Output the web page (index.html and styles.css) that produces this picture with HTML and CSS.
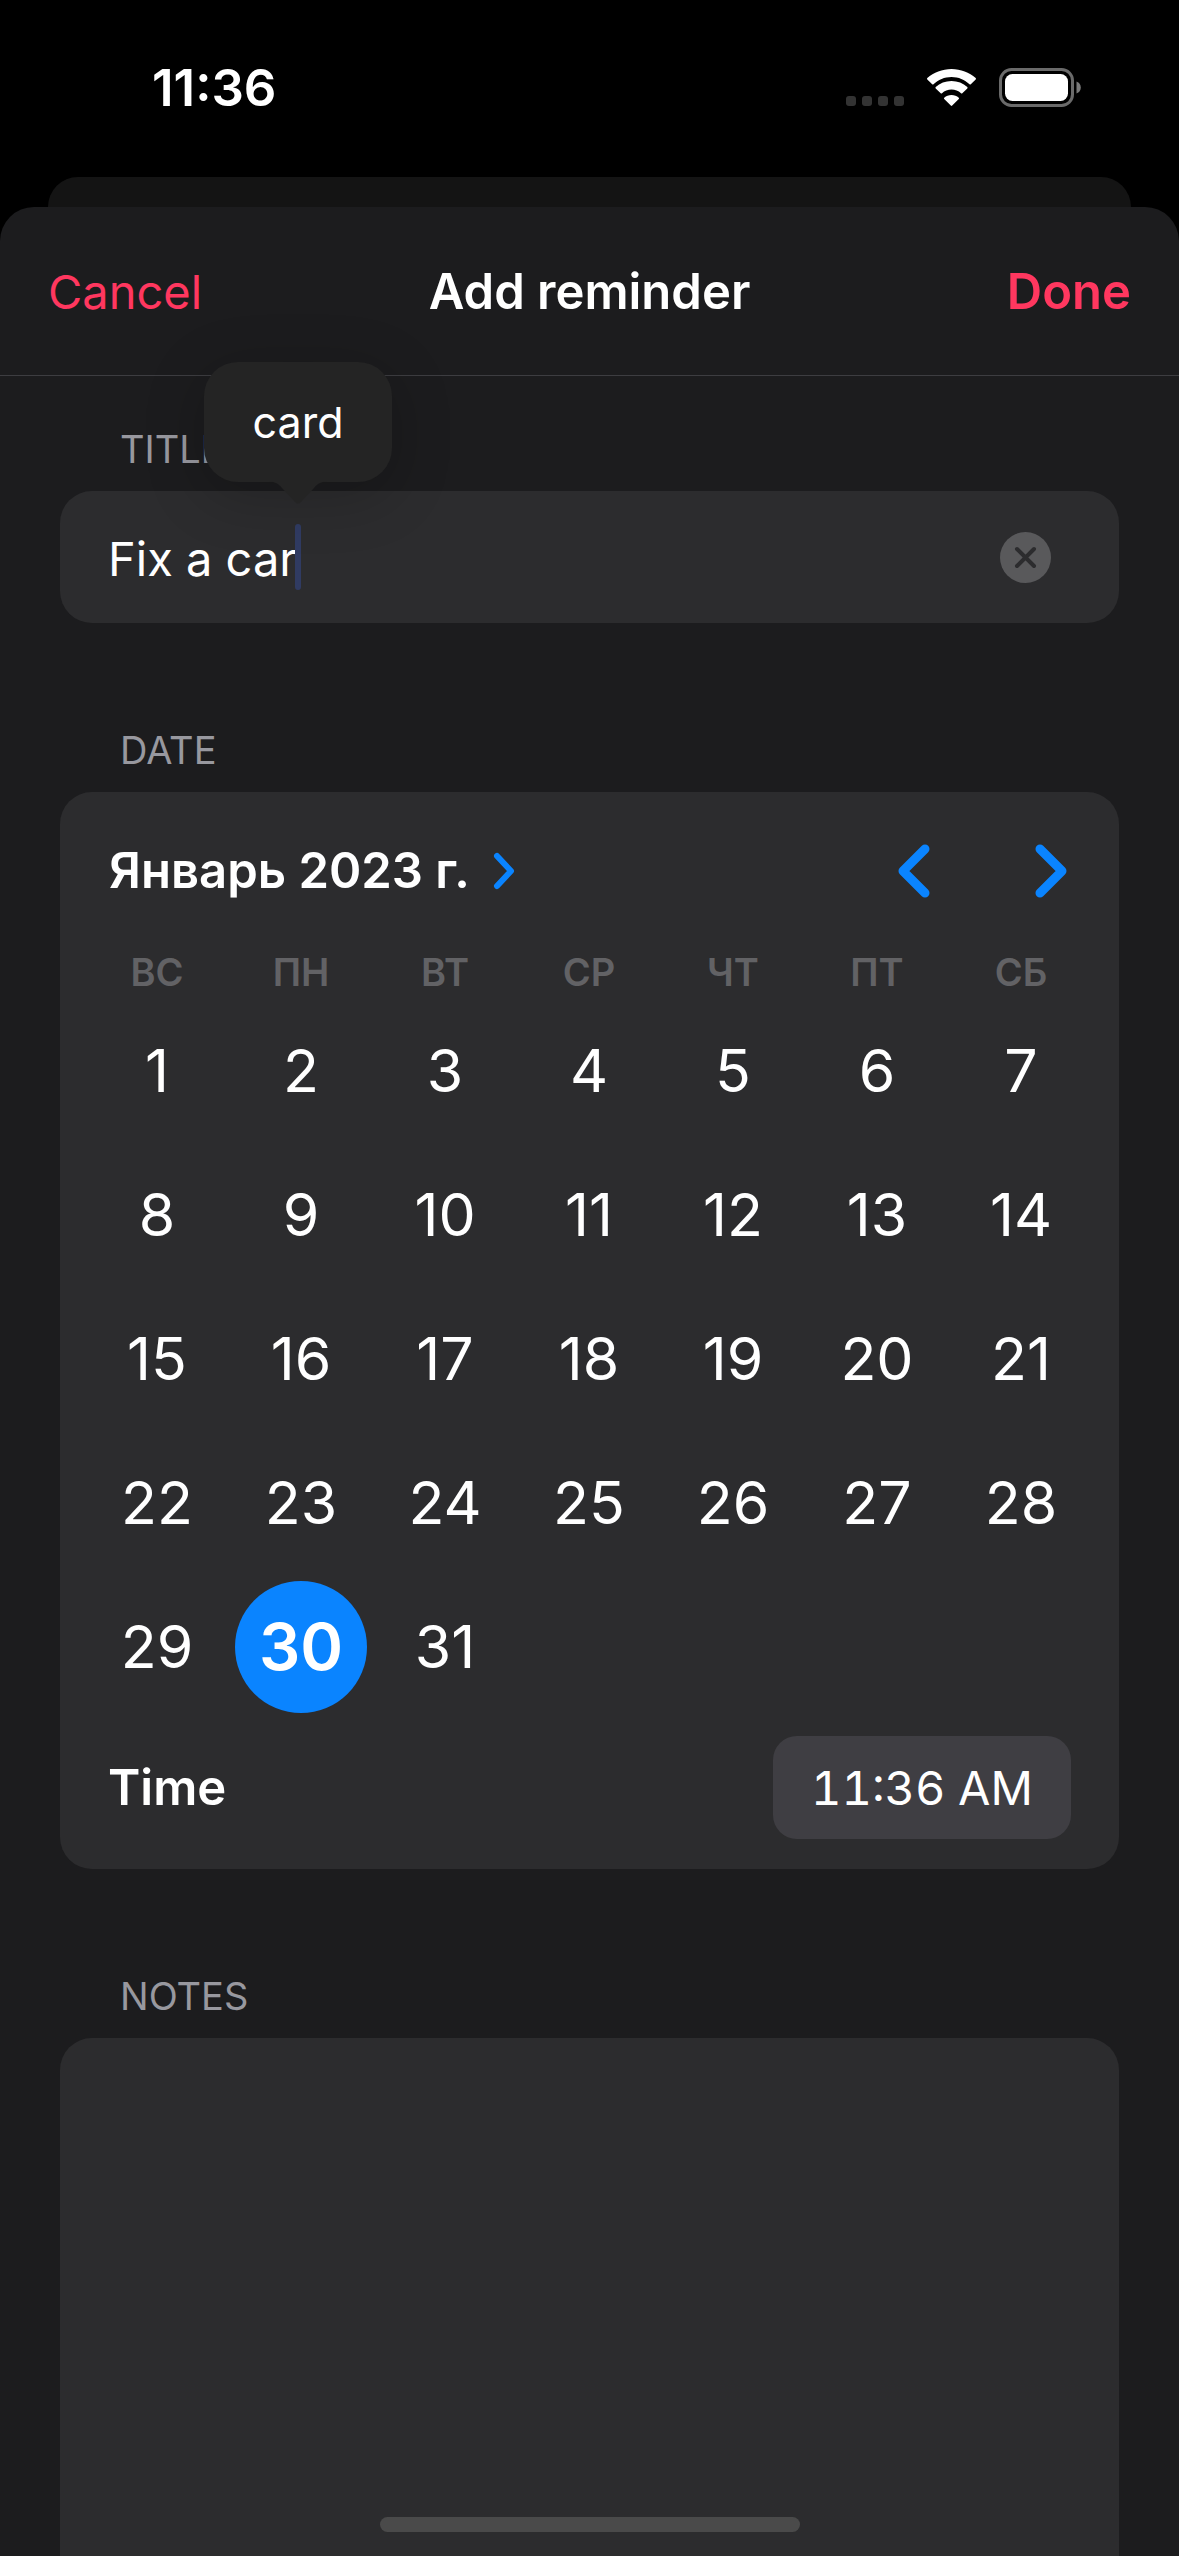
FILE: index.html
```html
<!DOCTYPE html>
<html lang="en">
<head>
<meta charset="utf-8">
<meta name="viewport" content="width=device-width, initial-scale=1">
<title>Add reminder</title>
<link rel="stylesheet" href="styles.css">
</head>
<body>
<header class="status">
  <span class="status-time">11:36</span>
  <div class="status-icons">
    <svg class="dots" width="58" height="10" viewBox="0 0 58 10" aria-hidden="true">
      <rect width="10" height="10" rx="3"/><rect x="16" width="10" height="10" rx="3"/><rect x="32" width="10" height="10" rx="3"/><rect x="48" width="10" height="10" rx="3"/>
    </svg>
    <svg class="wifi" width="51" height="38" viewBox="0 0 51 38" aria-hidden="true">
      <path d="M25.500 8c7 0 13.300 2.800 18 7.300.4.400 1 .4 1.300 0l4.900-4.800c.4-.4.4-1 0-1.400C43.300 3.500 34.800 0 25.500 0S7.700 3.500 1.300 9.100c-.4.400-.4 1 0 1.400l4.900 4.800c.4.400.9.400 1.300 0 4.700-4.500 11-7.300 18-7.300z"/>
      <path d="M25.500 20.600c3.600 0 7 1.300 9.500 3.700.4.400 1 .4 1.300 0l5-4.800c.4-.4.400-1 0-1.400-4.200-3.900-9.700-6.100-15.800-6.100S13.900 14.200 9.700 18.100c-.4.400-.4 1 0 1.400l5 4.800c.4.400.9.400 1.300 0 2.500-2.400 5.900-3.700 9.500-3.700z"/>
      <path d="M32.800 28.700c.4.400.4 1 0 1.300l-6.600 6.600c-.4.400-1 .4-1.400 0L18.200 30c-.4-.3-.4-.9 0-1.300 2-1.700 4.500-2.700 7.300-2.700s5.300 1 7.300 2.700z"/>
    </svg>
    <svg class="battery" width="82" height="39" viewBox="0 0 82 39" aria-hidden="true">
      <rect x="1.500" y="1.500" width="72" height="36" rx="11" fill="none" stroke="#6a6a6a" stroke-width="3"/>
      <rect x="6" y="6" width="63" height="27" rx="7.500" fill="#fff"/>
      <path d="M77.500 13.500c2.700 1 4.300 3.300 4.300 6s-1.600 5-4.300 6z" fill="#7a7a7a"/>
    </svg>
  </div>
</header>
<div class="back-card"></div>
<main class="sheet">
  <nav class="bar">
    <button class="link cancel" type="button">Cancel</button>
    <h1 class="bar-title">Add reminder</h1>
    <button class="link done" type="button">Done</button>
  </nav>
  <form class="form">
    <section class="section">
      <label class="label" for="title">TITLE</label>
      <div class="card field">
        <input class="input" id="title" type="text" value="Fix a car" autocomplete="off">
        <span class="caret"></span>
        <div class="suggestion">
          <button class="suggestion-text" type="button">card</button>
          <svg class="suggestion-tail" width="64" height="23" viewBox="0 0 64 23" aria-hidden="true"><path d="M0 0c7 0 12 2 16 7l13 14c2 2 4 2 6 0L48 7c4-5 9-7 16-7z" fill="#242424"/></svg>
        </div>
        <button class="clear" type="button" aria-label="Clear">
          <svg width="51" height="51" viewBox="0 0 51 51"><circle cx="25.500" cy="25.500" r="25.500" fill="#59595b"/><path d="M17 17l17 17M34 17L17 34" stroke="#2c2c2e" stroke-width="4" stroke-linecap="round"/></svg>
        </button>
      </div>
    </section>
    <section class="section">
      <h2 class="label">DATE</h2>
      <div class="card">
        <div class="month-row">
          <button class="month" type="button">Январь 2023 г.
            <svg width="22" height="38" viewBox="0 0 22 38"><path d="M4 4l14 15L4 34" class="chevron thin"/></svg>
          </button>
          <div class="arrows">
            <button class="arrow" type="button" aria-label="Previous month"><svg width="32" height="54" viewBox="0 0 32 54"><path d="M27 5L5 27l22 22" class="chevron"/></svg></button>
            <button class="arrow" type="button" aria-label="Next month"><svg width="32" height="54" viewBox="0 0 32 54"><path d="M5 5l22 22L5 49" class="chevron"/></svg></button>
          </div>
        </div>
        <div class="month-grid">
          <table class="calendar">
            <thead><tr><th>ВС</th><th>ПН</th><th>ВТ</th><th>СР</th><th>ЧТ</th><th>ПТ</th><th>СБ</th></tr></thead>
            <tbody>
              <tr><td><button class="day" type="button">1</button></td><td><button class="day" type="button">2</button></td><td><button class="day" type="button">3</button></td><td><button class="day" type="button">4</button></td><td><button class="day" type="button">5</button></td><td><button class="day" type="button">6</button></td><td><button class="day" type="button">7</button></td></tr>
              <tr><td><button class="day" type="button">8</button></td><td><button class="day" type="button">9</button></td><td><button class="day" type="button">10</button></td><td><button class="day" type="button">11</button></td><td><button class="day" type="button">12</button></td><td><button class="day" type="button">13</button></td><td><button class="day" type="button">14</button></td></tr>
              <tr><td><button class="day" type="button">15</button></td><td><button class="day" type="button">16</button></td><td><button class="day" type="button">17</button></td><td><button class="day" type="button">18</button></td><td><button class="day" type="button">19</button></td><td><button class="day" type="button">20</button></td><td><button class="day" type="button">21</button></td></tr>
              <tr><td><button class="day" type="button">22</button></td><td><button class="day" type="button">23</button></td><td><button class="day" type="button">24</button></td><td><button class="day" type="button">25</button></td><td><button class="day" type="button">26</button></td><td><button class="day" type="button">27</button></td><td><button class="day" type="button">28</button></td></tr>
              <tr><td><button class="day" type="button">29</button></td><td><button class="day selected" type="button" aria-pressed="true">30</button></td><td><button class="day" type="button">31</button></td><td></td><td></td><td></td><td></td></tr>
            </tbody>
          </table>
        </div>
        <div class="time-row">
          <span class="time-label" id="time-label">Time</span>
          <button class="time" type="button" aria-describedby="time-label">11:36 AM</button>
        </div>
      </div>
    </section>
    <section class="section notes-section">
      <label class="label" for="notes">NOTES</label>
      <textarea class="card notes" id="notes"></textarea>
    </section>
  </form>
</main>
<div class="home-indicator"></div>
</body>
</html>
```
FILE: styles.css
```css
* {
  box-sizing: border-box;
}

body {
  margin: 0;
  min-height: 100vh;
  display: flex;
  flex-direction: column;
  position: relative;
  background: #000;
  color: #fff;
  font-family: Inter, "Noto Sans", sans-serif;
  font-size: 47px;
  line-height: 60px;
}

button,
input,
textarea {
  margin: 0;
  padding: 0;
  border: 0;
  outline: 0;
  background: none;
  color: inherit;
  font: inherit;
}

svg {
  display: block;
}

.status {
  height: 177px;
  padding: 0 98px 0 152px;
  display: flex;
  justify-content: space-between;
}

.status-time {
  padding-top: 58px;
  font-size: 51px;
  font-weight: 600;
}

.status-icons {
  height: 39px;
  margin-top: 68px;
  display: flex;
  align-items: flex-end;
}

.dots {
  fill: #333;
  margin: 0 22px 1px 0;
}

.wifi {
  fill: #fff;
  margin-right: 22px;
}

.back-card {
  height: 30px;
  margin: 0 48px;
  border-radius: 30px 30px 0 0;
  background: #141414;
}

.sheet {
  flex: 1;
  display: flex;
  flex-direction: column;
  border-radius: 34px 34px 0 0;
  background: #1c1c1e;
}

.bar {
  height: 169px;
  padding: 2px 48px 0;
  display: grid;
  grid-template-columns: 1fr auto 1fr;
  align-items: center;
  border-bottom: 1px solid #3d3d41;
}

.bar-title,
.label {
  margin: 0;
}

.bar-title,
.done,
.month,
.time-label {
  font-size: 49px;
  font-weight: 600;
}

.link {
  color: #ff375f;
}

.cancel {
  justify-self: start;
}

.done {
  justify-self: end;
}

.form {
  flex: 1;
  display: flex;
  flex-direction: column;
  gap: 103px;
  padding: 49px 60px 0;
}

.section {
  display: flex;
  flex-direction: column;
  gap: 18px;
}

.label {
  padding-left: 60px;
  color: #98989f;
  font-size: 38px;
  font-weight: 400;
  line-height: 48px;
}

.card {
  border-radius: 32px;
  background: #2c2c2e;
}

.field {
  position: relative;
  height: 132px;
  padding: 0 68px 0 48px;
  display: flex;
  align-items: center;
}

.input {
  flex: 1;
  min-width: 0;
  height: 100%;
  padding-top: 2px;
}

.caret {
  position: absolute;
  left: 235px;
  top: 33px;
  width: 6px;
  height: 66px;
  border-radius: 3px;
  background: #303b62;
}

.suggestion {
  position: absolute;
  left: 144px;
  bottom: 141px;
  width: 188px;
  height: 120px;
  border-radius: 34px;
  background: #242424;
  box-shadow: 0 12px 60px rgba(0, 0, 0, 0.22);
}

.suggestion-text {
  width: 100%;
  height: 100%;
  font-size: 43px;
}

.suggestion-tail {
  position: absolute;
  left: 62px;
  top: 119px;
}

.month-row {
  height: 156px;
  padding: 2px 52px 0 49px;
  display: flex;
  align-items: center;
  justify-content: space-between;
}

.month {
  display: flex;
  align-items: center;
  gap: 23px;
}

.arrows {
  display: flex;
  gap: 105px;
}

.chevron {
  fill: none;
  stroke: #0a84ff;
  stroke-width: 9;
  stroke-linecap: round;
  stroke-linejoin: round;
}

.thin {
  stroke-width: 6;
}

.month-grid {
  padding: 0 26px 0 25px;
}

.calendar {
  width: 100%;
  table-layout: fixed;
  border-collapse: collapse;
  text-align: center;
}

.calendar th {
  height: 51px;
  padding: 0;
  color: #626265;
  font-size: 38px;
  font-weight: 600;
  line-height: 48px;
  vertical-align: top;
}

.calendar td {
  height: 144px;
  padding: 0;
}

.day {
  display: block;
  width: 132px;
  height: 132px;
  margin: 0 auto;
  border-radius: 50%;
  font-size: 59px;
}

.selected {
  background: #0a84ff;
  font-size: 65px;
  font-weight: 600;
}

.time-row {
  padding: 17px 48px 30px;
  display: flex;
  align-items: center;
  justify-content: space-between;
}

.time {
  height: 103px;
  padding: 0 38px;
  border-radius: 24px;
  background: #3f3e43;
  font-variant-numeric: tabular-nums;
}

.notes-section {
  flex: 1;
}

.notes {
  flex: 1;
  width: 100%;
  padding: 36px 48px;
  border-radius: 32px 32px 0 0;
  resize: none;
}

.home-indicator {
  position: absolute;
  left: 50%;
  bottom: 24px;
  width: 420px;
  height: 15px;
  margin-left: -210px;
  border-radius: 8px;
  background: #4a4a4a;
}
```
